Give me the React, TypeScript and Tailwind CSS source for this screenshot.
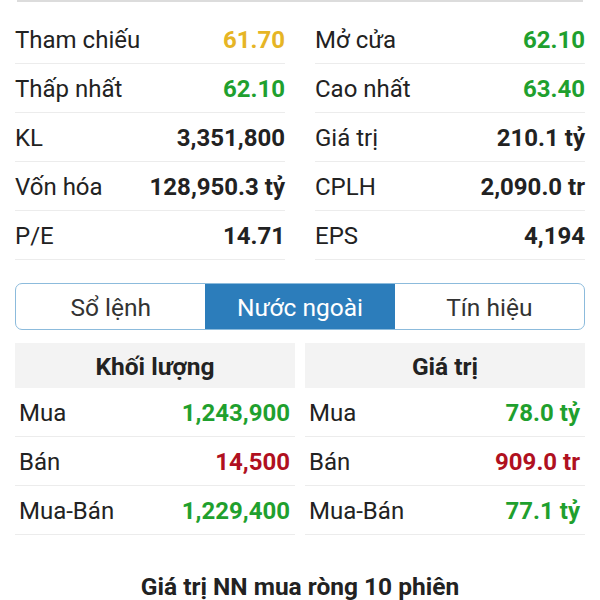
const GREEN = "text-[#1fa02e]"
const RED = "text-[#b01020]"
const YELLOW = "text-[#e6b525]"
const DARK = "text-[#222]"

type Cell = { label: string; value: string; color: string }

const leftStats: Cell[] = [
  { label: "Tham chiếu", value: "61.70", color: YELLOW },
  { label: "Thấp nhất", value: "62.10", color: GREEN },
  { label: "KL", value: "3,351,800", color: DARK },
  { label: "Vốn hóa", value: "128,950.3 tỷ", color: DARK },
  { label: "P/E", value: "14.71", color: DARK },
]

const rightStats: Cell[] = [
  { label: "Mở cửa", value: "62.10", color: GREEN },
  { label: "Cao nhất", value: "63.40", color: GREEN },
  { label: "Giá trị", value: "210.1 tỷ", color: DARK },
  { label: "CPLH", value: "2,090.0 tr", color: DARK },
  { label: "EPS", value: "4,194", color: DARK },
]

const volume: Cell[] = [
  { label: "Mua", value: "1,243,900", color: GREEN },
  { label: "Bán", value: "14,500", color: RED },
  { label: "Mua-Bán", value: "1,229,400", color: GREEN },
]

const value: Cell[] = [
  { label: "Mua", value: "78.0 tỷ", color: GREEN },
  { label: "Bán", value: "909.0 tr", color: RED },
  { label: "Mua-Bán", value: "77.1 tỷ", color: GREEN },
]

function StatRow({ cell, inset }: { cell: Cell; inset?: boolean }) {
  return (
    <div
      className={`flex h-[49px] items-center justify-between border-b border-[#ececec] pt-[1px] ${
        inset ? "pl-[4px] pr-[5px]" : ""
      }`}
    >
      <span className="text-[24px] text-[#222]">{cell.label}</span>
      <span className={`text-[24px] font-bold ${cell.color}`}>{cell.value}</span>
    </div>
  )
}

function ForeignColumn({ title, rows }: { title: string; rows: Cell[] }) {
  return (
    <div className="flex flex-col">
      <div className="flex h-[45px] items-center justify-center bg-[#f3f3f3] pt-[3px] text-[24.5px] font-bold text-[#222]">
        {title}
      </div>
      {rows.map((r) => (
        <StatRow key={r.label} cell={r} inset />
      ))}
    </div>
  )
}

export default function App() {
  const tabs = ["Sổ lệnh", "Nước ngoài", "Tín hiệu"]
  return (
    <div className="h-[600px] w-[600px] overflow-hidden bg-white font-['Roboto',sans-serif]">
      <div className="mx-[17px] h-[2px] bg-[#dcdcdc]" />

      <div className="mt-[13px] grid grid-cols-2 gap-x-[30px] px-[15px]">
        <div className="flex flex-col">
          {leftStats.map((c) => (
            <StatRow key={c.label} cell={c} />
          ))}
        </div>
        <div className="flex flex-col">
          {rightStats.map((c) => (
            <StatRow key={c.label} cell={c} />
          ))}
        </div>
      </div>

      <div className="mx-[15px] mt-[23px] flex h-[47px] overflow-hidden rounded-[7px] border-[1.5px] border-[#8cbbdc]">
        {tabs.map((t, i) => (
          <div
            key={t}
            className={`flex flex-1 items-center justify-center pt-[3px] text-[24.5px] ${
              i === 1 ? "bg-[#2c7dbb] text-white" : "text-[#333]"
            }`}
          >
            {t}
          </div>
        ))}
      </div>

      <div className="mt-[13px] grid grid-cols-2 gap-x-[10px] px-[15px]">
        <ForeignColumn title="Khối lượng" rows={volume} />
        <ForeignColumn title="Giá trị" rows={value} />
      </div>

      <div className="mt-[34px] text-center text-[24.5px] font-bold text-[#222]">
        Giá trị NN mua ròng 10 phiên
      </div>
    </div>
  )
}
